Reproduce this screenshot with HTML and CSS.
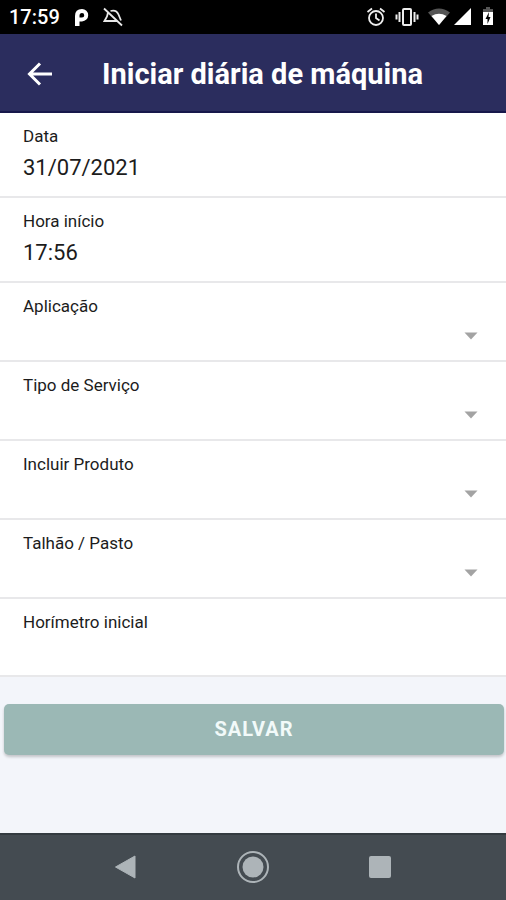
FILE: index.html
```html
<!DOCTYPE html>
<html lang="pt-BR">
<head>
<meta charset="utf-8">
<meta name="viewport" content="width=device-width, initial-scale=1">
<title>Iniciar diária de máquina</title>
<link rel="stylesheet" href="styles.css">
</head>
<body>
<div class="status">
  <span class="clock">17:59</span>
  <svg class="brand" width="16" height="20" viewBox="0 0 16 20" aria-hidden="true"><path d="M1 19V9Q1 2 8 2a6.200 6.200 0 0 1 0 12.400H5.500V19zM5.500 10.500H8A2.200 2.200 0 0 0 8 6Q5.500 6 5.500 8.500z" fill="#fff" fill-rule="evenodd"/></svg>
  <svg class="muted" width="20" height="20" viewBox="0 0 20 20" aria-hidden="true"><g fill="none" stroke="#e8e8e8" stroke-width="1.800"><path d="M1 1.500 19 18.500M5 5.500 4 9.500 1.500 14H14M7.500 4C11 3 14 4 15.500 7.500L18 13.500"/></g></svg>
  <span class="indicators">
    <svg width="20" height="20" viewBox="0 0 20 20" aria-hidden="true"><g fill="none" stroke="#eee" stroke-width="1.800"><circle cx="10" cy="11" r="7"/><path d="M10 6.500V11l3.500 2.500M1.500 5 6 1.500M18.500 5 14 1.500"/></g></svg>
    <svg width="24" height="20" viewBox="0 0 24 20" aria-hidden="true"><g fill="none" stroke="#eee" stroke-width="2"><rect x="8" y="2" width="8" height="16" rx="1"/><path d="M4.500 5v10M1.500 7.500v5M19.500 5v10M22.500 7.500v5"/></g></svg>
    <svg width="22" height="20" viewBox="0 0 22 20" aria-hidden="true"><path d="M0 5.500Q11-2.500 22 5.500L11 18z" fill="#555"/><path d="M3.500 9Q11 4.500 18.500 9L11 18z" fill="#fff"/></svg>
    <svg class="signal" width="18" height="20" viewBox="0 0 18 20" aria-hidden="true"><path d="M0 18 17 1v17z" fill="#fff"/></svg>
    <svg class="battery" width="12" height="20" viewBox="0 0 12 20" aria-hidden="true"><path d="M4 0h4v2h3v3H1V2h3z" fill="#555"/><path d="M1 5h10v13H1z" fill="#fff"/><path d="M7 5 3.500 12h2v5l3-7h-2z" fill="#000"/></svg>
  </span>
</div>
<header class="bar">
  <button class="back" type="button" aria-label="Voltar">
    <svg width="26" height="26" viewBox="0 0 26 26" aria-hidden="true"><path d="M14 2.500 3.500 13 14 23.500M3.500 13H26" fill="none" stroke="#fff" stroke-width="3"/></svg>
  </button>
  <h1>Iniciar diária de máquina</h1>
</header>
<form class="form">
  <div class="field filled"><label for="data">Data</label><input id="data" type="text" value="31/07/2021"></div>
  <div class="field filled"><label for="hora">Hora início</label><input id="hora" type="text" value="17:56"></div>
  <div class="field"><label for="aplicacao">Aplicação</label><div class="pick"><select id="aplicacao"><option></option></select><svg width="14" height="8" viewBox="0 0 14 8" aria-hidden="true"><path d="M.500.500h13L7 7.500z"/></svg></div></div>
  <div class="field"><label for="servico">Tipo de Serviço</label><div class="pick"><select id="servico"><option></option></select><svg width="14" height="8" viewBox="0 0 14 8" aria-hidden="true"><path d="M.500.500h13L7 7.500z"/></svg></div></div>
  <div class="field"><label for="produto">Incluir Produto</label><div class="pick"><select id="produto"><option></option></select><svg width="14" height="8" viewBox="0 0 14 8" aria-hidden="true"><path d="M.500.500h13L7 7.500z"/></svg></div></div>
  <div class="field"><label for="talhao">Talhão / Pasto</label><div class="pick"><select id="talhao"><option></option></select><svg width="14" height="8" viewBox="0 0 14 8" aria-hidden="true"><path d="M.500.500h13L7 7.500z"/></svg></div></div>
  <div class="field"><label for="horimetro">Horímetro inicial</label><input id="horimetro" type="text"></div>
  <button class="save" type="submit">SALVAR</button>
</form>
<nav class="system">
  <button type="button" aria-label="Voltar"><svg width="34" height="34" viewBox="0 0 34 34" aria-hidden="true"><path d="M26 6v22L6.500 17z" stroke-linejoin="round" stroke-width="1"/></svg></button>
  <button type="button" aria-label="Início"><svg width="34" height="34" viewBox="0 0 34 34" aria-hidden="true"><circle cx="17" cy="17" r="15" class="ring"/><circle cx="17" cy="17" r="10.500"/></svg></button>
  <button type="button" aria-label="Recentes"><svg width="34" height="34" viewBox="0 0 34 34" aria-hidden="true"><rect x="6" y="6" width="22" height="22" rx="2"/></svg></button>
</nav>
</body>
</html>
```
FILE: styles.css
```css
* { box-sizing: border-box; }

body {
  margin: 0;
  min-height: 100vh;
  display: flex;
  flex-direction: column;
  background: #f3f5fa;
  color: #1c1c1c;
  font-family: Roboto, "Liberation Sans", sans-serif;
}

button, input, select { font: inherit; color: inherit; border: 0; padding: 0; margin: 0; }
button { background: none; cursor: pointer; }
svg { display: block; flex: none; }

.status {
  height: 34px;
  padding: 0 12px 0 9px;
  display: flex;
  align-items: center;
  background: #000;
  color: #fff;
}
.clock { font-size: 20px; font-weight: 500; line-height: 24px; }
.brand { margin-left: 14px; }
.muted { margin-left: 13px; }
.indicators { margin-left: auto; display: flex; align-items: center; gap: 9px; }
.signal { margin-left: -5px; }
.battery { margin-left: 1px; }

.bar {
  height: 79px;
  padding: 2px 26px 0;
  display: flex;
  align-items: center;
  gap: 50px;
  background: #2b2d5e;
  border-bottom: 2px solid #17184b;
  color: #fff;
}
h1 { margin: 0; font-size: 29px; line-height: 36px; font-weight: 700; }

.form { flex: 1; }
.field {
  padding: 11px 24px 0 23px;
  height: 79px;
  background: #fff;
  border-bottom: 2px solid #e8e8ea;
}
.field.filled { height: 85px; }
.field:last-of-type { height: 78px; }
.field label { display: block; font-size: 17px; line-height: 24px; }
.field input {
  display: block;
  width: 100%;
  height: 38px;
  background: none;
  font-size: 22px;
  outline: none;
}
.pick { display: grid; align-items: center; }
.pick select, .pick svg { grid-area: 1 / 1; }
.pick select {
  appearance: none;
  width: 100%;
  height: 36px;
  background: none;
  font-size: 22px;
  outline: none;
}
.pick svg { justify-self: end; margin-right: 4px; pointer-events: none; fill: #a3a3a3; }

.save {
  display: block;
  width: calc(100% - 6px);
  height: 51px;
  padding-bottom: 1px;
  margin: 27px 2px 24px 4px;
  border-radius: 5px;
  background: #9bb8b5;
  box-shadow: 0 2px 3px #00000033;
  color: #f2faf9;
  font-size: 20px;
  font-weight: 700;
  letter-spacing: 1px;
}

.system {
  height: 67px;
  padding: 0 63px 2px;
  display: flex;
  align-items: center;
  background: #444b51;
  border-top: 2px solid #343b40;
}
.system button { flex: 1; display: flex; justify-content: center; }
.system svg { fill: #adb4b8; stroke: none; }
.system path { stroke: #adb4b8; }
.system .ring { fill: none; stroke: #adb4b8; stroke-width: 2px; }
```
